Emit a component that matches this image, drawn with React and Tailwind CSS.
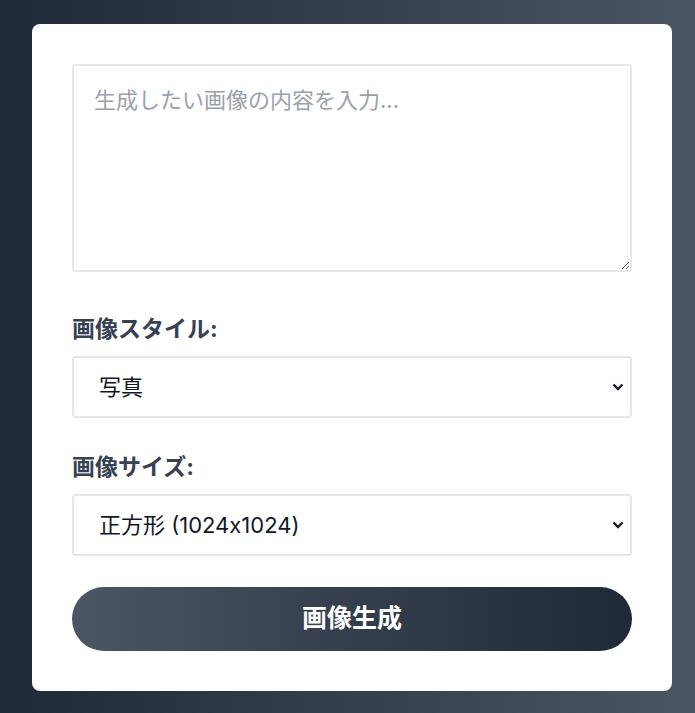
import React, { useState } from "react";

const fontStack = {
  fontFamily: '"Inter", "Noto Sans CJK JP", sans-serif',
};

const styles = [
  { value: "photo", label: "写真" },
  { value: "illust", label: "イラスト" },
  { value: "anime", label: "アニメ" },
];

const sizes = [
  { value: "1024x1024", label: "正方形 (1024x1024)" },
  { value: "1792x1024", label: "横長 (1792x1024)" },
  { value: "1024x1792", label: "縦長 (1024x1792)" },
];

const Chevron = () => (
  <svg
    className="pointer-events-none absolute right-[8px] top-1/2 -translate-y-1/2"
    width="12"
    height="8"
    viewBox="0 0 12 8"
    fill="none"
  >
    <path d="M1.5 1.5L6 6L10.5 1.5" stroke="#111827" strokeWidth="2.4" />
  </svg>
);

const Select = ({ value, onChange, options, className }) => (
  <div className={`relative ${className}`}>
    <select
      value={value}
      onChange={(e) => onChange(e.target.value)}
      className="block w-full h-[62px] appearance-none border-2 border-gray-200 rounded pl-[25px] pr-8 text-[22px] text-gray-900 bg-white focus:outline-none"
    >
      {options.map((o) => (
        <option key={o.value} value={o.value}>
          {o.label}
        </option>
      ))}
    </select>
    <Chevron />
  </div>
);

const App = () => {
  const [prompt, setPrompt] = useState("");
  const [style, setStyle] = useState("photo");
  const [size, setSize] = useState("1024x1024");

  return (
    <div
      className="min-h-screen bg-gradient-to-r from-[#1f2937] to-[#4b5563] pt-6 pb-6"
      style={fontStack}
    >
      <div className="ml-8 w-[640px] bg-white rounded-lg p-10 flex flex-col">
        <textarea
          value={prompt}
          onChange={(e) => setPrompt(e.target.value)}
          placeholder="生成したい画像の内容を入力..."
          className="block w-full h-[208px] mb-[41px] border-2 border-gray-200 rounded p-5 text-[22px] leading-7 text-gray-900 placeholder:text-gray-400 focus:outline-none"
        />

        <label className="block text-[23px] leading-8 font-bold text-gray-700 mb-[11px]">
          画像スタイル:
        </label>
        <Select value={style} onChange={setStyle} options={styles} className="mb-[33px]" />

        <label className="block text-[23px] leading-8 font-bold text-gray-700 mb-[11px]">
          画像サイズ:
        </label>
        <Select value={size} onChange={setSize} options={sizes} className="mb-[31px]" />

        <button className="w-full h-16 rounded-full bg-gradient-to-r from-[#4b5563] to-[#1f2937] text-white text-[25px] font-bold">
          画像生成
        </button>
      </div>
    </div>
  );
};

export default App;
